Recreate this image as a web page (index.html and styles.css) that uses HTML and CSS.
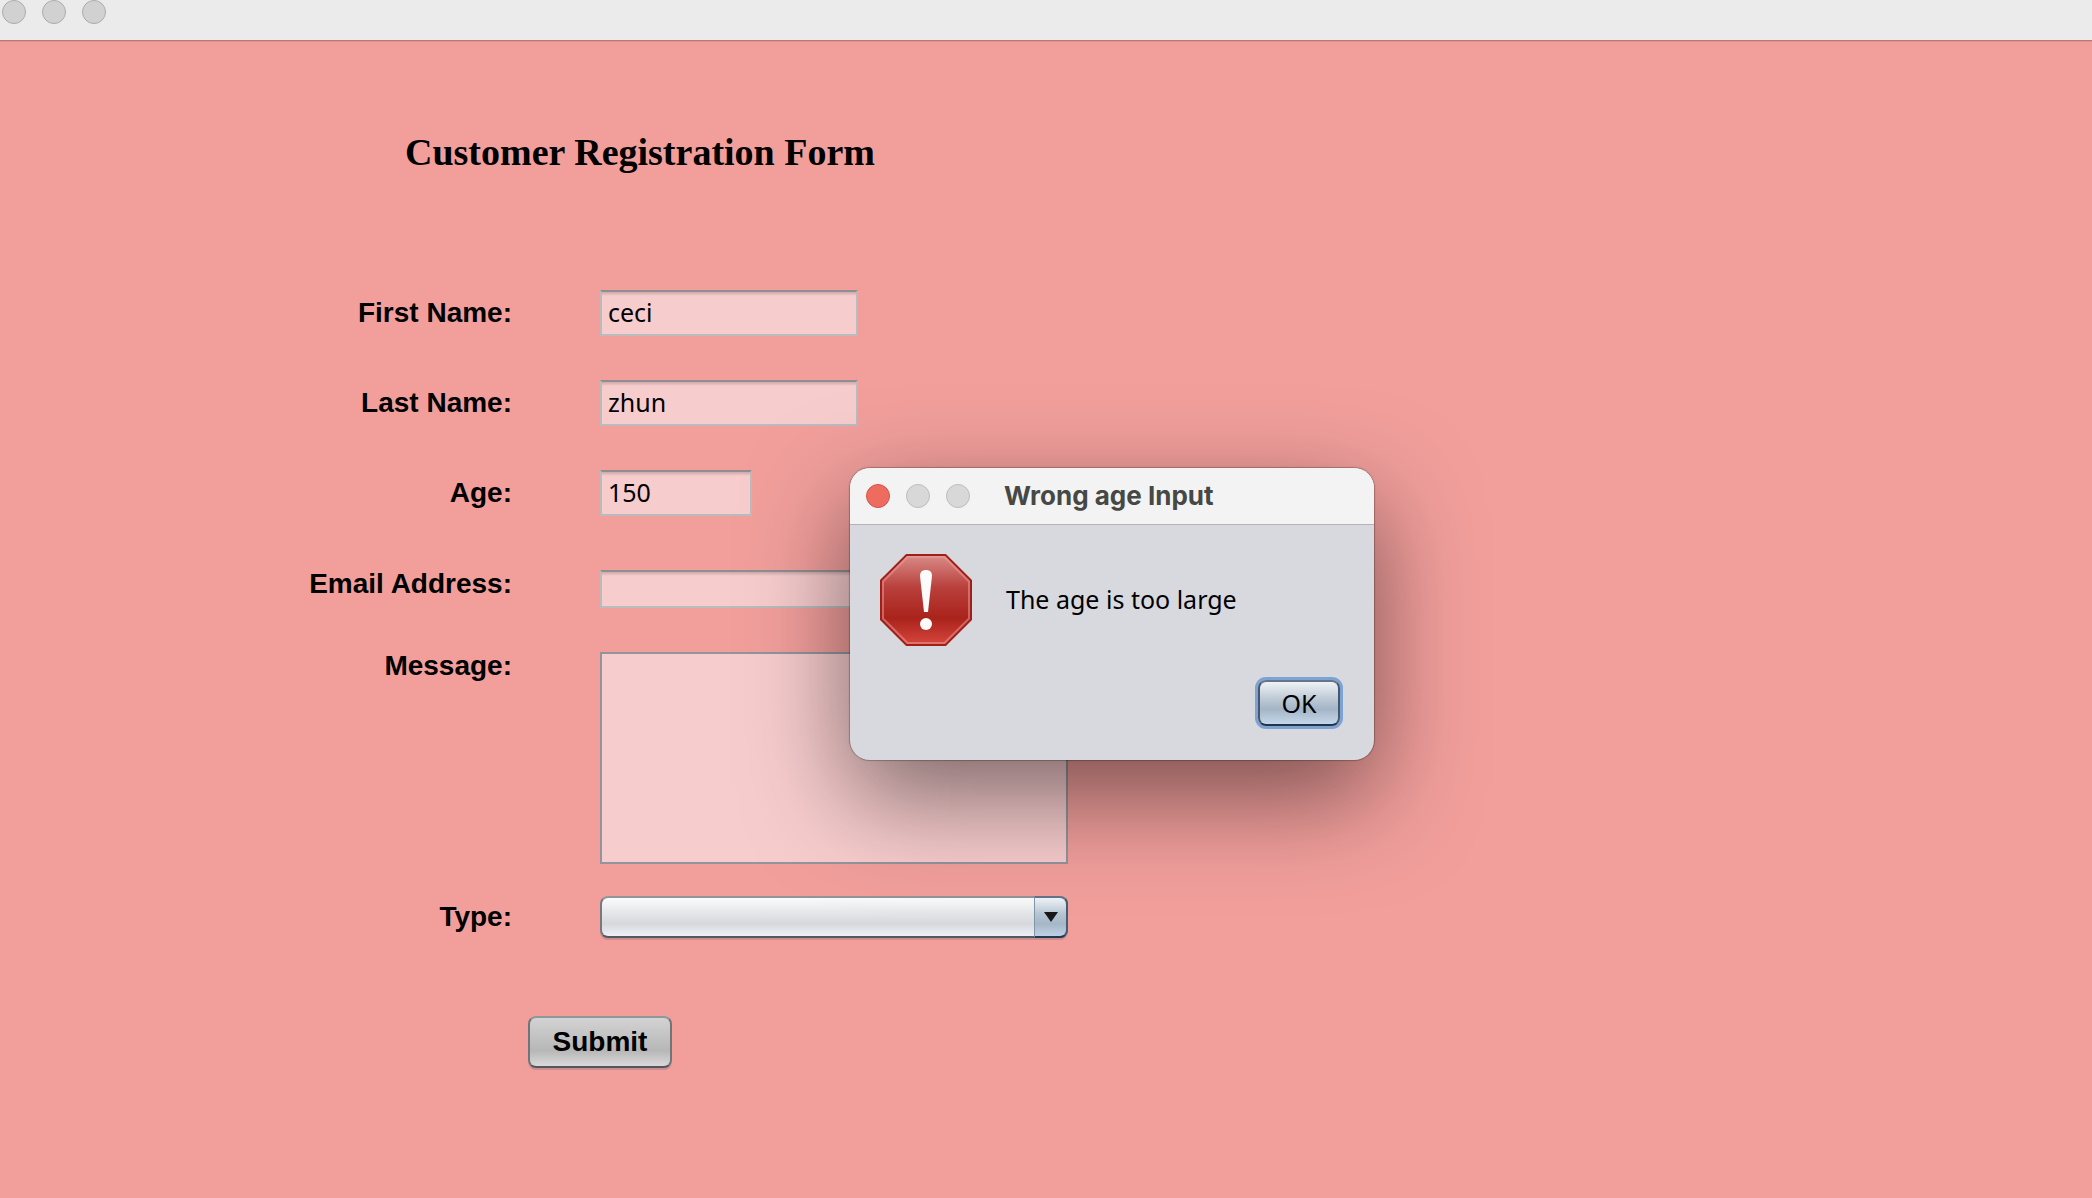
FILE: index.html
```html
<!DOCTYPE html>
<html lang="en">
<head>
<meta charset="utf-8">
<title>Customer Registration Form</title>
<link rel="stylesheet" href="styles.css">
</head>
<body>
<header class="titlebar">
  <span class="light"></span>
  <span class="light"></span>
  <span class="light"></span>
</header>
<main class="content">
  <h1 class="heading">Customer Registration Form</h1>
  <form class="form">
    <div class="row">
      <label class="label" for="first-name">First Name:</label>
      <input class="field" id="first-name" type="text" value="ceci">
    </div>
    <div class="row">
      <label class="label" for="last-name">Last Name:</label>
      <input class="field" id="last-name" type="text" value="zhun">
    </div>
    <div class="row">
      <label class="label" for="age">Age:</label>
      <input class="field field--short" id="age" type="text" value="150">
    </div>
    <div class="row row--top row--email">
      <label class="label" for="email">Email Address:</label>
      <input class="field field--email" id="email" type="text">
    </div>
    <div class="row row--top">
      <label class="label" for="message">Message:</label>
      <textarea class="field field--message" id="message"></textarea>
    </div>
    <div class="row row--type">
      <label class="label" for="type">Type:</label>
      <div class="combo">
        <select class="combo__select" id="type"><option></option></select>
        <span class="combo__arrow">
          <svg width="14" height="10" viewBox="0 0 14 10"><path d="M0 0H14L7 10Z" fill="#181818"/></svg>
        </span>
      </div>
    </div>
    <button class="submit" type="button">Submit</button>
  </form>
</main>
<dialog class="dialog" open aria-labelledby="dialog-title">
  <div class="dialog__bar">
    <button class="light light--close" type="button" aria-label="Close"></button>
    <span class="light light--pale"></span>
    <span class="light light--pale"></span>
    <h2 class="dialog__title" id="dialog-title">Wrong age Input</h2>
  </div>
  <div class="dialog__body">
    <svg class="dialog__icon" width="92" height="92" viewBox="0 0 92 92">
      <defs>
        <linearGradient id="sign" x1="0" y1="0" x2="0" y2="1">
          <stop offset="0" stop-color="#d98c89"/>
          <stop offset=".36" stop-color="#b9403c"/>
          <stop offset=".7" stop-color="#a9231b"/>
          <stop offset="1" stop-color="#d6463e"/>
        </linearGradient>
      </defs>
      <path d="M26.500 1H65.500L91 26.500V65.500L65.500 91H26.500L1 65.500V26.500Z" fill="url(#sign)" stroke="#9f2018" stroke-width="2"/>
      <path d="M27.500 3H64.500L89 27.500V64.500L64.500 89H27.500L3 64.500V27.500Z" fill="none" stroke="#f0a09c" stroke-opacity=".5" stroke-width="2"/>
      <path d="M40 22C40 18 42 16 46 16S52 18 52 22L48 58H44Z" fill="#fbfbfb"/>
      <circle cx="46" cy="70" r="6" fill="#fbfbfb"/>
    </svg>
    <p class="dialog__text">The age is too large</p>
  </div>
  <div class="dialog__actions">
    <button class="ok" type="button">OK</button>
  </div>
</dialog>
</body>
</html>
```
FILE: styles.css
```css
* {
  box-sizing: border-box;
}

body {
  margin: 0;
  min-height: 100vh;
  background: #f29f9c;
  color: #000;
  font-family: "Noto Sans", sans-serif;
  font-size: 25px;
}

.titlebar {
  display: flex;
  gap: 16px;
  height: 42px;
  padding-left: 2px;
  background: #ebebeb;
  border-bottom: 1px solid #dd9391;
  box-shadow: inset 0 -1px #c57370;
}

.light {
  width: 24px;
  height: 24px;
  padding: 0;
  border: 1px solid #acacac;
  border-radius: 50%;
  background: #d1d1d1;
}

.light--close {
  border-color: #d75448;
  background: #ed6b5f;
}

.light--pale {
  border-color: #bdbdbd;
  background: #d8d8d8;
}

.heading {
  margin: 0;
  padding: 88px 0 116px 405px;
  font: bold 38px/44px "Liberation Serif", serif;
}

.form {
  display: flex;
  flex-direction: column;
  gap: 44px;
}

.row {
  display: grid;
  grid-template-columns: 512px 1fr;
  column-gap: 88px;
  align-items: center;
  justify-items: start;
}

.row--top {
  align-items: start;
  margin-top: -2px;
}

.row--top .field {
  margin-top: 2px;
}

.row--email {
  margin-top: 8px;
}

.row--type {
  margin-top: -12px;
}

.label {
  justify-self: end;
  font: bold 28px/32px "Liberation Sans", sans-serif;
}

.field {
  display: block;
  width: 258px;
  height: 46px;
  padding: 0 6px 2px;
  border: 2px solid #b9bbbc;
  border-top-color: #8f8f91;
  border-radius: 0;
  outline: 0;
  background: linear-gradient(#cfa9aa, #f7cccd 4px);
  color: #000;
  font: inherit;
}

.field--short {
  width: 152px;
}

.field--email {
  width: 468px;
  height: 38px;
}

.field--message {
  width: 468px;
  height: 212px;
  border-color: #92959d;
  background: #f7cccd;
  resize: none;
}

.combo {
  position: relative;
  width: 468px;
  height: 42px;
}

.combo__select {
  width: 100%;
  height: 100%;
  appearance: none;
  border: 2px solid #777981;
  border-color: #94959a #65717d #535761 #777981;
  border-radius: 8px;
  background: linear-gradient(#fbfbfc, #e2e3e6 45%, #d7d8dc 68%, #eff0f6);
  box-shadow: 0 2px #cb8d8d;
  font: inherit;
}

.combo__arrow {
  position: absolute;
  inset: 0 0 0 auto;
  display: flex;
  align-items: center;
  justify-content: center;
  width: 34px;
  border: 2px solid #465d75;
  border-color: #647488 #465d75 #24384f #8296aa;
  border-left-width: 1px;
  border-radius: 0 8px 8px 0;
  background: linear-gradient(#f0f4f8, #b6c5d3 42%, #a5b6c7 68%, #bfd1e4);
  pointer-events: none;
}

.submit {
  width: 144px;
  height: 52px;
  margin: 34px 0 0 528px;
  padding: 0;
  border: 2px solid #70757a;
  border-color: #8f979a #70757a #51565f;
  border-radius: 8px;
  background: linear-gradient(#d3d3d3, #b7b7b7 68%, #d9d9d9);
  box-shadow: 0 2px #cb8d8d;
  color: #000;
  font: bold 28px/32px "Liberation Sans", sans-serif;
}

.dialog {
  position: absolute;
  top: 468px;
  left: calc(50% - 196px);
  width: 524px;
  margin: 0;
  padding: 0;
  border: 0;
  border-radius: 20px;
  background: #d8d9df;
  color: #000;
  box-shadow: 0 0 1px 1px rgba(0, 0, 0, .25), 0 36px 100px rgba(0, 0, 0, .5);
}

.dialog__bar {
  display: flex;
  align-items: center;
  gap: 16px;
  height: 57px;
  padding-left: 16px;
  border-bottom: 1px solid #b2b4ba;
  border-radius: 20px 20px 0 0;
  background: #f3f3f3;
}

.dialog__title {
  margin: 0 0 0 18px;
  color: #464846;
  font: bold 26px/32px Inter, sans-serif;
}

.dialog__body {
  display: flex;
  align-items: center;
  gap: 34px;
  padding: 29px 30px 0;
}

.dialog__text {
  margin: 0;
  padding-bottom: 2px;
}

.dialog__actions {
  display: flex;
  justify-content: flex-end;
  padding: 34px 34px;
}

.ok {
  width: 82px;
  height: 46px;
  padding: 0;
  border: 2px solid #46566c;
  border-color: #65758a #46566c #22344b;
  border-radius: 8px;
  background: linear-gradient(#eff2f6, #b8c5d2 45%, #a4b5c6 65%, #c4d7ea);
  box-shadow: 0 0 0 3px #7da3d3;
  color: #000;
  font: inherit;
}
```
